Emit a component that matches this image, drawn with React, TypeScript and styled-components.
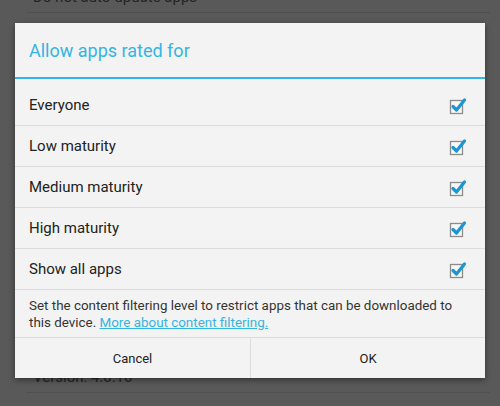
import * as React from 'react';
import styled, { createGlobalStyle } from 'styled-components';

const GlobalStyle = createGlobalStyle`
    html, body {
        margin: 0;
        padding: 0;
        background: #595959;
    }
    body {
        font-family: Roboto, "Noto Sans", "Liberation Sans", sans-serif;
    }
`;

const Screen = styled.div`
    position: relative;
    width: 500px;
    height: 406px;
    overflow: hidden;
    background: #595959;
`;

const BgList = styled.div`
    display: flex;
    flex-direction: column;
    height: calc(100% + 18px);
    margin-top: -18px;
    padding: 0 10px 0 27px;
`;

const BgItem = styled.div`
    display: flex;
    align-items: center;
    height: 30px;
    padding-left: 6px;
    font-size: 15px;
    color: #252525;
    border-bottom: 1px solid #4f4f4f;
`;

const BgSpacer = styled.div<{ $size?: number }>`
    flex: ${(p) => (p.$size ? `0 0 ${p.$size}px` : '1')};
`;

const Dialog = styled.div`
    position: absolute;
    left: 15px;
    top: 23px;
    width: 470px;
    display: flex;
    flex-direction: column;
    background: #f3f3f3;
    box-shadow: 0 2px 6px rgba(0, 0, 0, 0.45);
`;

const Title = styled.div`
    height: 54px;
    display: flex;
    align-items: center;
    padding-left: 14px;
    font-size: 18px;
    color: #33b5e5;
    border-bottom: 2px solid #33b5e5;
`;

const Options = styled.div`
    display: flex;
    flex-direction: column;
    padding-top: 6px;
`;

const Option = styled.label`
    height: 40px;
    display: flex;
    align-items: center;
    justify-content: space-between;
    padding: 0 17px 0 14px;
    font-size: 15px;
    color: #222;
    border-bottom: 1px solid #dcdcdc;
`;

const Description = styled.div`
    padding: 8px 30px 6px 14px;
    font-size: 13.4px;
    line-height: 16.5px;
    color: #333;
`;

const Link = styled.a`
    color: #33b5e5;
    text-decoration: underline;
`;

const ButtonBar = styled.div`
    display: grid;
    grid-template-columns: 1fr 1fr;
    border-top: 1px solid #dcdcdc;
`;

const Button = styled.div<{ $divider?: boolean }>`
    height: 40px;
    display: flex;
    align-items: center;
    justify-content: center;
    font-size: 13px;
    color: #222;
    border-left: ${(p) => (p.$divider ? '1px solid #dcdcdc' : 'none')};
`;

const Check = () => (
    <svg width="20" height="20" viewBox="0 0 20 20">
        <rect x="2.5" y="5.5" width="12" height="13" fill="#f7f7f7" stroke="#8c8c8c" strokeWidth="1.3" />
        <path d="M5 11.5 L8.5 15 L16.5 5" fill="none" stroke="#1b95d4" strokeWidth="3.2" strokeLinecap="round" strokeLinejoin="round" />
    </svg>
);

const options = ['Everyone', 'Low maturity', 'Medium maturity', 'High maturity', 'Show all apps'];

export default function App() {
    return (
        <Screen>
            <GlobalStyle />
            <BgList>
                <BgItem>Do not auto-update apps</BgItem>
                <BgSpacer />
                <BgItem>Version: 4.0.10</BgItem>
                <BgSpacer $size={13} />
            </BgList>
            <Dialog>
                <Title>Allow apps rated for</Title>
                <Options>
                    {options.map((o) => (
                        <Option key={o}>
                            <span>{o}</span>
                            <Check />
                        </Option>
                    ))}
                </Options>
                <Description>
                    Set the content filtering level to restrict apps that can be downloaded to this
                    device. <Link>More about content filtering.</Link>
                </Description>
                <ButtonBar>
                    <Button>Cancel</Button>
                    <Button $divider>OK</Button>
                </ButtonBar>
            </Dialog>
        </Screen>
    );
}
